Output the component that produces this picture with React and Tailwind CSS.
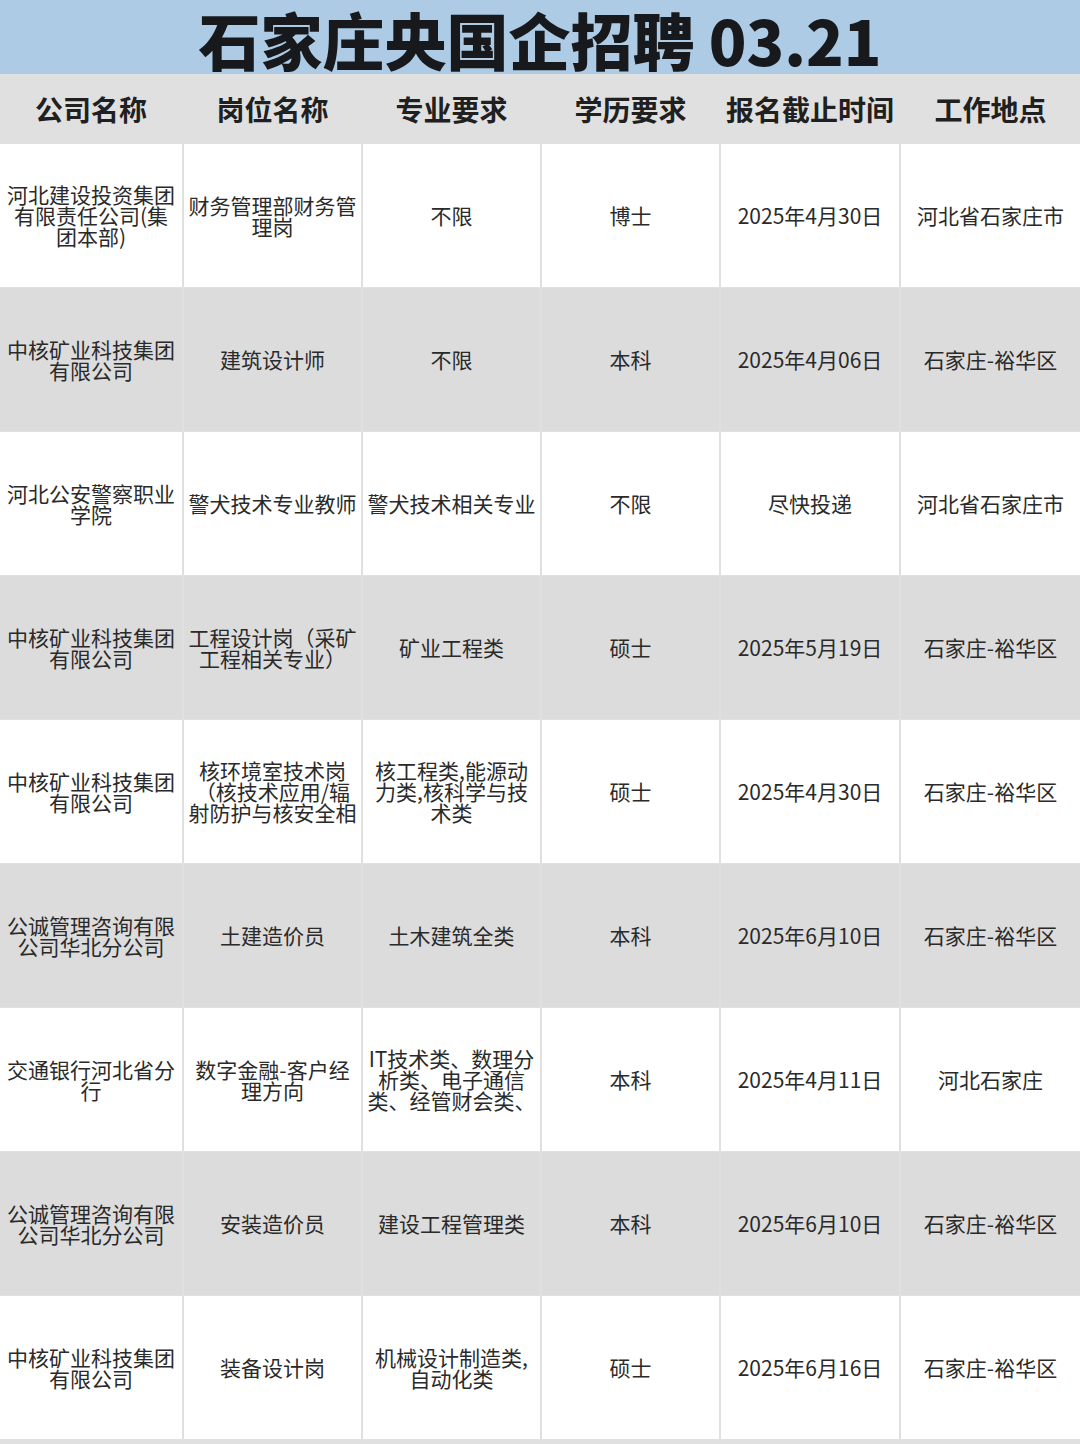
import React from 'react'

const rows = [
  ['河北建设投资集团有限责任公司(集团本部)', '财务管理部财务管理岗', '不限', '博士', '2025年4月30日', '河北省石家庄市'],
  ['中核矿业科技集团有限公司', '建筑设计师', '不限', '本科', '2025年4月06日', '石家庄-裕华区'],
  ['河北公安警察职业学院', '警犬技术专业教师', '警犬技术相关专业', '不限', '尽快投递', '河北省石家庄市'],
  ['中核矿业科技集团有限公司', '工程设计岗（采矿工程相关专业）', '矿业工程类', '硕士', '2025年5月19日', '石家庄-裕华区'],
  ['中核矿业科技集团有限公司', '核环境室技术岗（核技术应用/辐射防护与核安全相', '核工程类,能源动力类,核科学与技术类', '硕士', '2025年4月30日', '石家庄-裕华区'],
  ['公诚管理咨询有限公司华北分公司', '土建造价员', '土木建筑全类', '本科', '2025年6月10日', '石家庄-裕华区'],
  ['交通银行河北省分行', '数字金融-客户经理方向', 'IT技术类、数理分析类、电子通信类、经管财会类、', '本科', '2025年4月11日', '河北石家庄'],
  ['公诚管理咨询有限公司华北分公司', '安装造价员', '建设工程管理类', '本科', '2025年6月10日', '石家庄-裕华区'],
  ['中核矿业科技集团有限公司', '装备设计岗', '机械设计制造类,自动化类', '硕士', '2025年6月16日', '石家庄-裕华区'],
]

const headers = ['公司名称', '岗位名称', '专业要求', '学历要求', '报名截止时间', '工作地点']

function App() {
  return (
    <div
      className="w-[1080px] h-[1444px] overflow-hidden bg-[#e0e0e0] text-[#2a2a2a]"
      style={{ fontFamily: '"Noto Sans CJK SC", "Noto Sans", sans-serif' }}
    >
      <div className="h-[74px] bg-[#adcbe5] flex items-center justify-center">
        <h1 className="text-[62px] font-black leading-none text-[#17191c] pt-[3px]">
          石家庄央国企招聘 03.21
        </h1>
      </div>

      <div className="grid grid-cols-[182px_177px_177px_177px_178px_179px] gap-x-[2px] gap-y-[1px]">
        {headers.map((h) => (
          <div
            key={h}
            className="h-[69px] bg-[#e0e0e0] flex items-center justify-center text-[28px] font-bold text-[#202020]"
          >
            {h}
          </div>
        ))}

        {rows.map((row, i) =>
          row.map((cell, j) => (
            <div
              key={i + '-' + j}
              className={
                'h-[143px] flex items-center justify-center px-[4px] text-center text-[21px] leading-[21px] ' +
                (i % 2 === 1 ? 'bg-[#dcdcdc]' : 'bg-white')
              }
            >
              <span className="block">{cell}</span>
            </div>
          )),
        )}
      </div>
    </div>
  )
}

export default App
